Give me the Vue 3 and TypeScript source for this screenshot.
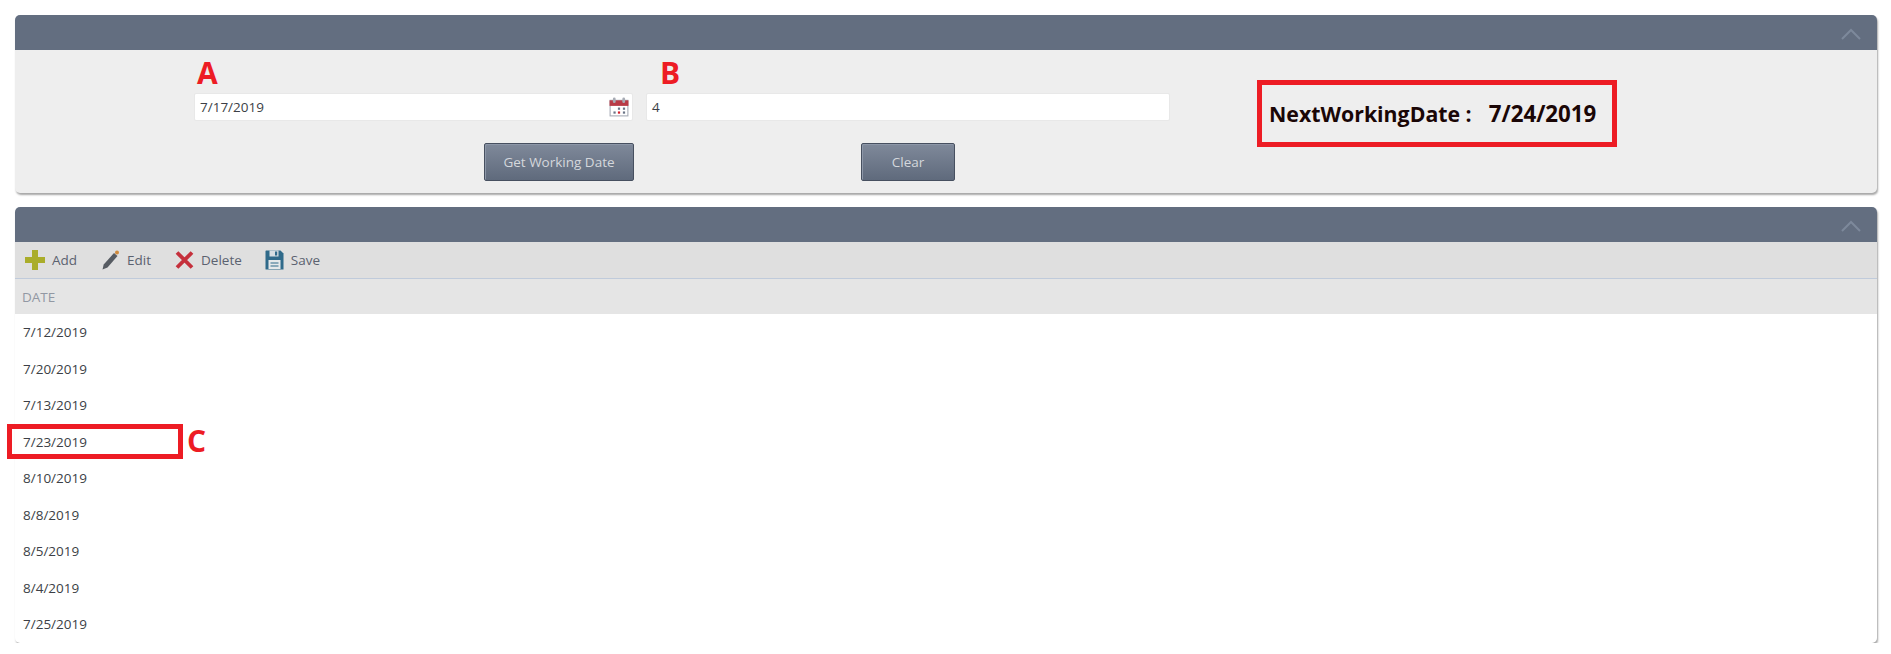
<script setup lang="ts">
// Working date calculator: form panel on top, holiday grid below
const dates: string[] = [
  '7/12/2019',
  '7/20/2019',
  '7/13/2019',
  '7/23/2019',
  '8/10/2019',
  '8/8/2019',
  '8/5/2019',
  '8/4/2019',
  '7/25/2019',
]
const markedDate = '7/23/2019'
</script>

<template>
  <div class="page">
    <section class="panel">
      <header class="panel-head">
        <svg class="chevron" width="20" height="12" viewBox="0 0 20 12">
          <path d="M1 11 L10 2 L19 11" fill="none" stroke="#7d899b" stroke-width="2" />
        </svg>
      </header>
      <div class="form-body">
        <div class="form-left">
          <div class="fields">
            <div class="field field-a">
              <span class="mark mark-a">A</span>
              <div class="input">
                <span>7/17/2019</span>
                <svg class="calendar" width="20" height="20" viewBox="0 0 18 18">
                  <rect x="1" y="3" width="16" height="14" fill="#fff" stroke="#a9adb8" />
                  <rect x="0.500" y="3" width="17" height="5" fill="#b83a46" />
                  <rect x="3.500" y="0.500" width="2.500" height="5" rx="1.200" fill="#a7abb4" />
                  <rect x="12" y="0.500" width="2.500" height="5" rx="1.200" fill="#a7abb4" />
                  <rect x="8" y="9.500" width="2" height="2" fill="#6a7486" />
                  <rect x="12.500" y="9.500" width="2" height="2" fill="#6a7486" />
                  <rect x="4" y="13" width="2" height="2" fill="#6a7486" />
                  <rect x="8" y="13" width="2" height="2" fill="#d5202c" />
                  <rect x="12.500" y="13" width="2" height="2" fill="#6a7486" />
                </svg>
              </div>
            </div>
            <div class="field field-b">
              <span class="mark mark-b">B</span>
              <div class="input"><span>4</span></div>
            </div>
          </div>
          <div class="actions">
            <button class="btn btn-get" type="button">Get Working Date</button>
            <button class="btn btn-clear" type="button">Clear</button>
          </div>
        </div>
        <div class="result">
          <span class="result-label">NextWorkingDate :</span>
          <span class="result-date">7/24/2019</span>
        </div>
      </div>
    </section>

    <section class="panel panel-grid">
      <header class="panel-head">
        <svg class="chevron" width="20" height="12" viewBox="0 0 20 12">
          <path d="M1 11 L10 2 L19 11" fill="none" stroke="#7d899b" stroke-width="2" />
        </svg>
      </header>
      <div class="toolbar">
        <span class="tool">
          <svg width="20" height="20" viewBox="0 0 20 20">
            <path d="M7 0h6v7h7v6h-7v7H7v-7H0V7h7z" fill="#aaad2b" />
          </svg>
          Add
        </span>
        <span class="tool">
          <svg width="19" height="20" viewBox="0 0 18 20">
            <path d="M12.500 3l3.500 3L6 17.500 1 19.500 2.200 14.500z" fill="#565b62" />
            <circle cx="15.500" cy="2.500" r="2" fill="#d08a3c" />
          </svg>
          Edit
        </span>
        <span class="tool">
          <svg width="19" height="20" viewBox="0 0 19 20">
            <path d="M2 2.500 L17 17.500 M17 2.500 L2 17.500" stroke="#c5303c" stroke-width="3.800" fill="none" />
          </svg>
          Delete
        </span>
        <span class="tool tool-save">
          <svg width="19" height="20" viewBox="0 0 19 20">
            <path d="M1 0.500h14.500l3 3v16H1a.5.5 0 0 1-.5-.5V1z" fill="#2f6a8a" />
            <rect x="4.500" y="0.500" width="9" height="6" fill="#d5dde2" />
            <rect x="10" y="1.500" width="2.200" height="4" fill="#2f6a8a" />
            <rect x="3.500" y="10" width="12" height="9" fill="#e4e8ea" />
            <path d="M5.500 13h8M5.500 16h8" stroke="#2f6a8a" stroke-width="1.200" />
          </svg>
          Save
        </span>
      </div>
      <div class="grid-head">DATE</div>
      <div class="grid-rows">
        <div v-for="d in dates" :key="d" class="grid-row">
          {{ d }}
          <template v-if="d === markedDate">
            <span class="row-box"></span>
            <span class="mark mark-c">C</span>
          </template>
        </div>
      </div>
    </section>
  </div>
</template>

<style scoped>
.page {
  display: flex;
  flex-direction: column;
  gap: 14px;
  padding: 15px 14px 0 15px;
  font-family: "Open Sans", "Noto Sans", sans-serif;
  font-size: 13.500px;
  color: #3c3f46;
}

.panel {
  border-radius: 5px;
  box-shadow: 1px 2px 2px rgba(0, 0, 0, 0.35);
  background: #eeeeee;
}

.panel-grid {
  background: #fff;
}

.panel-head {
  height: 35px;
  background: #636e80;
  border-radius: 5px 5px 0 0;
  display: flex;
  justify-content: flex-end;
  align-items: center;
  padding: 3px 16px 0 0;
  box-sizing: border-box;
}

.form-body {
  height: 143px;
  display: flex;
  padding-left: 179px;
}

.form-left {
  width: 976px;
}

.fields {
  display: flex;
  gap: 13px;
}

.field {
  display: flex;
  flex-direction: column;
}

.field-a {
  width: 439px;
}

.field-b {
  width: 524px;
}

.mark {
  color: #ed1c24;
  font-weight: 700;
  font-size: 30px;
  line-height: 40px;
  font-family: "Open Sans", sans-serif;
}

.mark-a {
  padding: 3px 0 0 3px;
}

.mark-b {
  padding: 3px 0 0 14px;
}

.input {
  height: 28px;
  background: #fff;
  border: 1px solid #e8e8e8;
  border-radius: 2px;
  box-sizing: border-box;
  display: flex;
  align-items: center;
  justify-content: space-between;
  padding: 0 3px 0 5px;
}

.calendar {
  flex: none;
}

.actions {
  display: flex;
  margin-top: 22px;
  padding-left: 290px;
}

.btn {
  height: 38px;
  border: 1px solid #475060;
  border-radius: 2px;
  background: linear-gradient(#7f899a, #5f6a7c);
  box-shadow: inset 1px 1px 0 #8d97a8;
  color: #d4d7dc;
  font: inherit;
  padding: 0;
}

.btn-get {
  width: 150px;
}

.btn-clear {
  width: 94px;
  margin-left: 227px;
}

.result {
  margin: 30px 0 0 87px;
  width: 360px;
  height: 67px;
  box-sizing: border-box;
  border: 5px solid #ed1c24;
  display: flex;
  align-items: center;
  gap: 17px;
  padding-left: 7px;
  font-size: 21.300px;
  font-weight: 700;
  color: #1a0606;
  white-space: nowrap;
}

.result-date {
  font-size: 22.300px;
}

.toolbar {
  height: 37px;
  background: #dfdfdf;
  border-bottom: 1px solid #c0cbdb;
  box-sizing: border-box;
  display: flex;
  align-items: center;
  gap: 24px;
  padding-left: 10px;
  color: #5b6270;
}

.tool {
  display: flex;
  align-items: center;
  gap: 7px;
}

.tool-save {
  margin-left: -1px;
}

.grid-head {
  height: 35px;
  background: #e5e5e5;
  display: flex;
  align-items: center;
  padding-left: 7px;
  color: #9298a3;
}

.grid-row {
  height: 36.500px;
  display: flex;
  align-items: center;
  padding-left: 8px;
  position: relative;
}

.row-box {
  position: absolute;
  left: -8px;
  top: 0;
  width: 176px;
  height: 35px;
  box-sizing: border-box;
  border: 5px solid #ed1c24;
}

.mark-c {
  position: absolute;
  left: 172px;
  top: -3px;
  padding: 0;
}
</style>

<style>
html,
body {
  background: #fff;
}
</style>
